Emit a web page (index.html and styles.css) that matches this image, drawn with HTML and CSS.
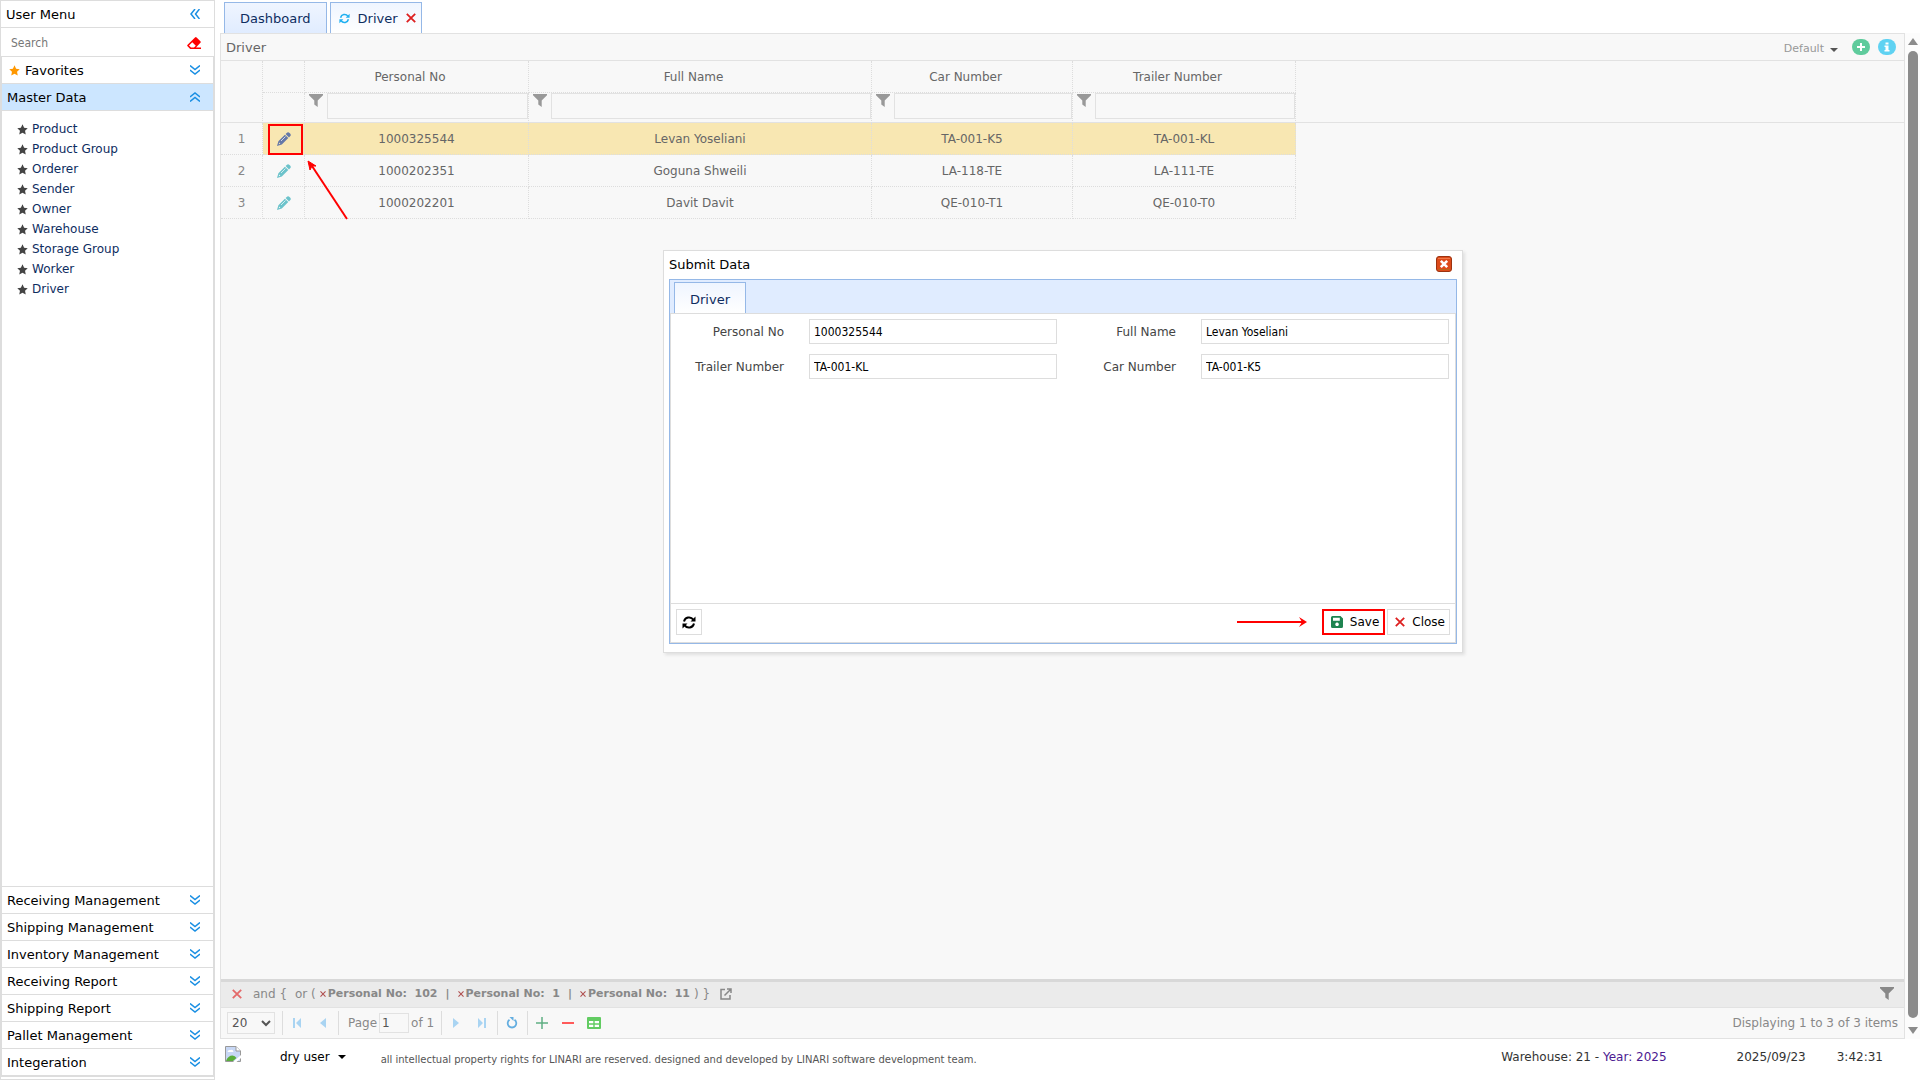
FILE: index.html
```html
<!DOCTYPE html>
<html lang="en">
  <head>
  <meta charset="UTF-8">
  <meta name="viewport" content="width=device-width,initial-scale=1.0">
  <title>Driver</title>
  <link rel="stylesheet" href="styles.css">
  </head>
  <body>
    <svg class="icon_defs" aria-hidden="true">
      <symbol id="i_down" viewBox="0 0 10 10"><path d="M0 0.5L5 4.5L10 0.5M0 5L5 9L10 5" fill="none" stroke="currentColor" stroke-width="1.5"/></symbol>
      <symbol id="i_up" viewBox="0 0 10 10"><path d="M0 5L5 1L10 5M0 9.5L5 5.5L10 9.5" fill="none" stroke="currentColor" stroke-width="1.5"/></symbol>
      <symbol id="i_left" viewBox="0 0 10 10"><path d="M5 0L1 5L5 10M9.5 0L5.5 5L9.5 10" fill="none" stroke="currentColor" stroke-width="1.5"/></symbol>
      <symbol id="i_star" viewBox="0 0 20 20"><path d="M10 0.5l2.9 6.3 6.6.8-4.900 4.700 1.300 6.900-5.900-3.400-5.900 3.400 1.300-6.900L0.500 7.600l6.600-.8z" fill="currentColor"/></symbol>
      <symbol id="i_funnel" viewBox="0 0 14 13"><path d="M0 0H14V1.200L8.700 6.500V13L5.300 10.500V6.500L0 1.200z" fill="currentColor"/></symbol>
      <symbol id="i_pencil" viewBox="0 0 14 14"><path d="M9.700.9a2 2 0 0 1 2.800 0l.6.6a2 2 0 0 1 0 2.800l-1.100 1.100L8.600 2zM7.900 2.700l3.400 3.400-6.500 6.500L0 14l1.400-4.800zM2.300 10.600l-.6 1.700 1.700-.6z" fill="currentColor" fill-rule="evenodd"/><path d="M4 9L8.500 4.500" stroke="#fff" stroke-width=".7"/></symbol>
      <symbol id="i_x" viewBox="0 0 10 10"><path d="M.8.8L9.200 9.200M9.200.8L.8 9.200" stroke="currentColor" stroke-width="1.800"/></symbol>
      <symbol id="i_sync" viewBox="0 0 14 13"><path d="M2 5.500A5.200 5.200 0 0 1 11.300 3.600M12 7.500A5.200 5.200 0 0 1 2.700 9.400" fill="none" stroke="currentColor" stroke-width="2"/><path d="M13.500.5V5.500H8.500zM.5 12.500V7.500H5.500z" fill="currentColor"/></symbol>
      <symbol id="i_eraser" viewBox="0 0 14 12"><path d="M8 .4q.8-.7 1.600 0L13.400 4.200q.8.800 0 1.600L9 10.500H14V12H3.200L.6 9.300q-.9-.8 0-1.600zM5.300 5.300L2 8.500l2 2h3l1.800-1.800z" fill="currentColor" fill-rule="evenodd"/></symbol>
      <symbol id="i_caret" viewBox="0 0 8 4"><path d="M0 0H8L4 4z" fill="currentColor"/></symbol>
    </svg>
    <nav class="side_menu">
      <div class="menu_title">User Menu
        <button type="button" class="icon_btn blue" aria-label="Collapse menu"><svg width="10" height="10"><use href="#i_left"/></svg></button>
      </div>
      <div class="menu_search">
        <input type="text" placeholder="Search" aria-label="Search">
        <button type="button" class="icon_btn red" aria-label="Clear search"><svg width="14" height="12"><use href="#i_eraser"/></svg></button>
      </div>
      <div class="accordion">
        <button type="button" class="acc_head favorites"><svg class="fav_star" width="11" height="11"><use href="#i_star"/></svg><span>Favorites</span><svg class="arrow" width="10" height="10"><use href="#i_down"/></svg></button>
        <button type="button" class="acc_head selected"><span>Master Data</span><svg class="arrow" width="10" height="10"><use href="#i_up"/></svg></button>
        <ul class="acc_body">
          <li><a href="#"><svg width="11" height="11"><use href="#i_star"/></svg>Product</a></li>
          <li><a href="#"><svg width="11" height="11"><use href="#i_star"/></svg>Product Group</a></li>
          <li><a href="#"><svg width="11" height="11"><use href="#i_star"/></svg>Orderer</a></li>
          <li><a href="#"><svg width="11" height="11"><use href="#i_star"/></svg>Sender</a></li>
          <li><a href="#"><svg width="11" height="11"><use href="#i_star"/></svg>Owner</a></li>
          <li><a href="#"><svg width="11" height="11"><use href="#i_star"/></svg>Warehouse</a></li>
          <li><a href="#"><svg width="11" height="11"><use href="#i_star"/></svg>Storage Group</a></li>
          <li><a href="#"><svg width="11" height="11"><use href="#i_star"/></svg>Worker</a></li>
          <li><a href="#"><svg width="11" height="11"><use href="#i_star"/></svg>Driver</a></li>
        </ul>
        <button type="button" class="acc_head"><span>Receiving Management</span><svg class="arrow" width="10" height="10"><use href="#i_down"/></svg></button>
        <button type="button" class="acc_head"><span>Shipping Management</span><svg class="arrow" width="10" height="10"><use href="#i_down"/></svg></button>
        <button type="button" class="acc_head"><span>Inventory Management</span><svg class="arrow" width="10" height="10"><use href="#i_down"/></svg></button>
        <button type="button" class="acc_head"><span>Receiving Report</span><svg class="arrow" width="10" height="10"><use href="#i_down"/></svg></button>
        <button type="button" class="acc_head"><span>Shipping Report</span><svg class="arrow" width="10" height="10"><use href="#i_down"/></svg></button>
        <button type="button" class="acc_head"><span>Pallet Management</span><svg class="arrow" width="10" height="10"><use href="#i_down"/></svg></button>
        <button type="button" class="acc_head"><span>Integeration</span><svg class="arrow" width="10" height="10"><use href="#i_down"/></svg></button>
      </div>
    </nav>
    <main class="content">
      <div class="tabs">
        <a href="#" class="tab">Dashboard</a>
        <div class="tab active">
          <svg class="sky" width="11" height="11"><use href="#i_sync"/></svg>
          <a href="#">Driver</a>
          <button type="button" class="icon_btn red_x" aria-label="Close tab"><svg width="10" height="10"><use href="#i_x"/></svg></button>
        </div>
      </div>
      <div class="workspace">
        <section class="grid_panel">
          <div class="grid_title">
            <span>Driver</span>
            <button type="button" class="default_btn">Default <svg width="8" height="4"><use href="#i_caret"/></svg></button>
            <button type="button" class="icon_btn" aria-label="Add"><svg width="18" height="16" viewBox="0 0 18 16"><rect width="18" height="16" rx="8" fill="#5fcb9c"/><path d="M9 4V12M5 8H13" stroke="#fff" stroke-width="2"/></svg></button>
            <button type="button" class="icon_btn" aria-label="Info"><svg width="18" height="16" viewBox="0 0 18 16"><rect width="18" height="16" rx="8" fill="#5fd2f2"/><path d="M7.500 3.500h3v2h-3zM6.500 6.500h4v4.500h1v1.500h-5v-1.500h1v-3h-1z" fill="#fff"/></svg></button>
          </div>
          <div class="grid_view">
            <table class="grid">
              <colgroup>
                <col class="col_num"><col class="col_edit"><col class="col_personal"><col class="col_name"><col class="col_car"><col class="col_trailer"><col>
              </colgroup>
              <thead>
                <tr>
                  <th rowspan="2" class="last_head"></th>
                  <th></th>
                  <th>Personal No</th>
                  <th>Full Name</th>
                  <th>Car Number</th>
                  <th>Trailer Number</th>
                  <th rowspan="2" class="last_head filler"></th>
                </tr>
                <tr class="filter_row">
                  <th></th>
                  <th><div class="filter"><svg width="14" height="13"><use href="#i_funnel"/></svg><input type="text" aria-label="Filter Personal No"></div></th>
                  <th><div class="filter"><svg width="14" height="13"><use href="#i_funnel"/></svg><input type="text" aria-label="Filter Full Name"></div></th>
                  <th><div class="filter"><svg width="14" height="13"><use href="#i_funnel"/></svg><input type="text" aria-label="Filter Car Number"></div></th>
                  <th><div class="filter"><svg width="14" height="13"><use href="#i_funnel"/></svg><input type="text" aria-label="Filter Trailer Number"></div></th>
                </tr>
              </thead>
              <tbody>
                <tr class="selected_row">
                  <td class="num">1</td>
                  <td class="edit">
                    <button type="button" class="icon_btn" aria-label="Edit"><svg width="14" height="14"><use href="#i_pencil"/></svg></button>
                    <svg class="edit_mark" width="82" height="98" viewBox="0 0 82 98">
                      <rect x="1" y="1" width="33" height="29" fill="none" stroke="#f00" stroke-width="2"/>
                      <path d="M79 95L44 42" stroke="#f00" stroke-width="2"/>
                      <path d="M40 37L48 42L44 42L42 46z" fill="#f00" stroke="#f00"/>
                    </svg>
                  </td>
                  <td>1000325544</td><td>Levan Yoseliani</td><td>TA-001-K5</td><td>TA-001-KL</td><td class="filler"></td>
                </tr>
                <tr>
                  <td class="num">2</td>
                  <td class="edit"><button type="button" class="icon_btn" aria-label="Edit"><svg width="14" height="14"><use href="#i_pencil"/></svg></button></td>
                  <td>1000202351</td><td>Goguna Shweili</td><td>LA-118-TE</td><td>LA-111-TE</td><td class="filler"></td>
                </tr>
                <tr>
                  <td class="num">3</td>
                  <td class="edit"><button type="button" class="icon_btn" aria-label="Edit"><svg width="14" height="14"><use href="#i_pencil"/></svg></button></td>
                  <td>1000202201</td><td>Davit Davit</td><td>QE-010-T1</td><td>QE-010-T0</td><td class="filler"></td>
                </tr>
              </tbody>
            </table>
          </div>
          <div class="filter_bar">
            <button type="button" class="icon_btn soft_red" aria-label="Clear filters"><svg width="10" height="10"><use href="#i_x"/></svg></button>
            <span class="op">and {</span>
            <span>or (</span>
            <div class="rules">
              <span class="rule"><svg width="6" height="6"><use href="#i_x"/></svg><b>Personal No:&nbsp; 102</b></span>
              <b>|</b>
              <span class="rule"><svg width="6" height="6"><use href="#i_x"/></svg><b>Personal No:&nbsp; 1</b></span>
              <b>|</b>
              <span class="rule"><svg width="6" height="6"><use href="#i_x"/></svg><b>Personal No:&nbsp; 11</b></span>
            </div>
            <span>) }</span>
            <button type="button" class="icon_btn open_btn" aria-label="Open filter"><svg width="12" height="12" viewBox="0 0 12 12"><path d="M5 1.500H1V11H10V7M7 1H11V5M11 1L4.500 7.500" fill="none" stroke="#888" stroke-width="1.500"/></svg></button>
            <svg class="bar_funnel" width="14" height="13"><use href="#i_funnel"/></svg>
          </div>
          <div class="pager">
            <select aria-label="Page size"><option>20</option></select>
            <i class="sep"></i>
            <button type="button" class="pager_btn pale" aria-label="First page"><svg width="10" height="10" viewBox="0 0 10 10"><path d="M1 0H3V10H1zM9 0V10L4 5z" fill="currentColor"/></svg></button>
            <button type="button" class="pager_btn pale" aria-label="Previous page"><svg width="10" height="10" viewBox="0 0 10 10"><path d="M8 0V10L2 5z" fill="currentColor"/></svg></button>
            <i class="sep"></i>
            <label class="page_no">Page<input type="text" value="1"></label>
            <span class="page_of">of 1</span>
            <i class="sep"></i>
            <button type="button" class="pager_btn pale" aria-label="Next page"><svg width="10" height="10" viewBox="0 0 10 10"><path d="M2 0V10L8 5z" fill="currentColor"/></svg></button>
            <button type="button" class="pager_btn pale" aria-label="Last page"><svg width="10" height="10" viewBox="0 0 10 10"><path d="M7 0H9V10H7zM1 0V10L6 5z" fill="currentColor"/></svg></button>
            <i class="sep"></i>
            <button type="button" class="pager_btn blue_soft" aria-label="Reload"><svg width="12" height="12" viewBox="0 0 12 12"><path d="M8.500 2.700A4.300 4.300 0 1 1 3.500 2.700" fill="none" stroke="currentColor" stroke-width="1.800"/><path d="M3.500 0H7.500V4z" fill="currentColor"/></svg></button>
            <i class="sep"></i>
            <button type="button" class="pager_btn green" aria-label="Add row"><svg width="12" height="12" viewBox="0 0 12 12"><path d="M6 0V12M0 6H12" stroke="currentColor" stroke-width="1.500"/></svg></button>
            <button type="button" class="pager_btn" aria-label="Remove row"><svg width="12" height="12" viewBox="0 0 12 12"><path d="M0 6H12" stroke="#ff5a5a" stroke-width="2"/></svg></button>
            <button type="button" class="pager_btn" aria-label="Export"><svg width="14" height="12" viewBox="0 0 14 12"><rect width="14" height="12" rx="1" fill="#62cc62"/><path d="M2 4H6.300V6.300H2zM7.700 4H12V6.300H7.700zM2 7.700H6.300V10H2zM7.700 7.700H12V10H7.700z" fill="#fff"/></svg></button>
            <span class="displaying">Displaying 1 to 3 of 3 items</span>
          </div>
        </section>
        <div class="scrollbar" aria-hidden="true">
          <svg width="10" height="7"><path d="M5 0L10 7H0z" fill="#8b8b8b"/></svg>
          <div class="thumb"></div>
          <svg width="10" height="7"><path d="M0 0H10L5 7z" fill="#8b8b8b"/></svg>
        </div>
        <form class="dialog" role="dialog" aria-labelledby="dialog_title">
          <div class="dialog_head">
            <span id="dialog_title">Submit Data</span>
            <button type="button" class="icon_btn" aria-label="Close dialog"><svg width="16" height="16" viewBox="0 0 16 16"><rect x=".5" y=".5" width="15" height="15" rx="2.500" fill="#dd4b1a" stroke="#9c3310"/><path d="M2 2H14V3H2z" fill="#f0794a"/><path d="M2 13H14V14H2z" fill="#b9661c"/><path d="M4.800 4.800L11.200 11.200M11.200 4.800L4.800 11.200" stroke="#fff" stroke-width="2.600"/></svg></button>
          </div>
          <div class="dialog_body">
            <div class="dialog_tabs"><a href="#" class="tab active">Driver</a></div>
            <div class="fields">
              <label for="personal_no">Personal No</label><input type="text" id="personal_no" value="1000325544">
              <label for="full_name">Full Name</label><input type="text" id="full_name" value="Levan Yoseliani">
              <label for="trailer_number">Trailer Number</label><input type="text" id="trailer_number" value="TA-001-KL">
              <label for="car_number">Car Number</label><input type="text" id="car_number" value="TA-001-K5">
            </div>
            <div class="dialog_foot">
              <button type="button" class="foot_btn refresh_btn" aria-label="Refresh"><svg width="14" height="13"><use href="#i_sync"/></svg></button>
              <svg class="save_arrow" width="71" height="12" viewBox="0 0 71 12"><path d="M0 6H68" stroke="#f00" stroke-width="2"/><path d="M62 1L70 6L62 11L65 6z" fill="#f00"/></svg>
              <button type="button" class="foot_btn save_btn"><svg width="12" height="12" viewBox="0 0 12 12"><path d="M1.500 0H9.500L12 2.500V10.500Q12 12 10.500 12H1.500Q0 12 0 10.500V1.500Q0 0 1.500 0zM2 1.800V4.800H8.800V1.800zM6 6.500a1.800 1.800 0 1 0 .1 0z" fill="#1e8450" fill-rule="evenodd"/></svg>Save</button>
              <button type="button" class="foot_btn"><svg class="red_x" width="10" height="10"><use href="#i_x"/></svg>Close</button>
            </div>
          </div>
        </form>
      </div>
      <footer class="status">
        <svg class="logo" width="16" height="16" viewBox="0 0 16 16" role="img" aria-label="Company logo"><path d="M.5.500H11L15.500 5V15.500H.5z" fill="#c7d7f5" stroke="#999"/><path d="M2.500 6Q3 3.500 5.500 4Q8 3 8.500 6z" fill="#fff"/><path d="M1 15Q3 9.500 7.500 9.500Q10 9.700 11.500 12L8 15z" fill="#59ad3b"/><path d="M11 .5V5H15.500" fill="#fff" stroke="#999"/><path d="M8 16L16 9V12L11.500 16z" fill="#fff"/></svg>
        <button type="button" class="user_btn">dry user <svg width="8" height="4"><use href="#i_caret"/></svg></button>
        <small>all intellectual property rights for LINARI are reserved. designed and developed by LINARI software development team.</small>
        <span class="warehouse">Warehouse: 21 - <a href="#">Year: 2025</a></span>
        <span class="date">2025/09/23</span>
        <span>3:42:31</span>
      </footer>
    </main>
  </body>
</html>
```
FILE: styles.css
```css
*{
  box-sizing:border-box;
}
body{
  display:flex;
  gap:5px;
  height:100vh;
  margin:0;
  background-color:#ffffff;
  color:#000000;
  font-family:Verdana, "DejaVu Sans", sans-serif;
  font-size:12px;
}
button, input, select{
  font:inherit;
  color:inherit;
}
a{
  color:inherit;
  text-decoration:none;
}
svg{
  display:block;
  flex:none;
}
.icon_defs{
  position:absolute;
  width:0;
  height:0;
}
.icon_btn{
  display:block;
  padding:0;
  border:0;
  background:none;
}
.blue{
  color:#1a8fe3;
}
.red{
  color:#ff0000;
}
.red_x{
  color:#dd2020;
}
.soft_red{
  color:#e46a6a;
}
.sky{
  color:#1fb0f0;
}

/* side menu */
.side_menu{
  display:flex;
  flex-direction:column;
  flex:none;
  width:215px;
  border:1px solid #dddddd;
  padding-bottom:2px;
}
.menu_title{
  display:flex;
  align-items:center;
  justify-content:space-between;
  height:27px;
  padding:0 14px 0 5px;
  border-bottom:1px solid #dddddd;
  font-size:13px;
}
.menu_search{
  display:flex;
  align-items:center;
  height:28px;
  padding:2px 13px 0 10px;
}
.menu_search input{
  flex:1;
  min-width:0;
  padding:0;
  border:0;
  outline:0;
  font-family:Tahoma, "DejaVu Sans Condensed", "DejaVu Sans", sans-serif;
}
.menu_search input::placeholder{
  color:#777777;
}
.accordion{
  display:flex;
  flex-direction:column;
  flex:1;
  border:1px solid #dddddd;
}
.acc_head{
  display:flex;
  align-items:center;
  height:27px;
  padding:0 13px 0 5px;
  border:0;
  border-bottom:1px solid #dddddd;
  background-color:#ffffff;
  font-size:13px;
}
.favorites{
  padding-left:7px;
}
.acc_head.selected{
  background-color:#cce6ff;
}
.fav_star{
  margin-right:5px;
  color:#ff9800;
}
.arrow{
  margin-left:auto;
  color:#1a8fe3;
}
.acc_body{
  flex:1;
  margin:0;
  padding:8px 15px;
  border-bottom:1px solid #dddddd;
  list-style:none;
}
.acc_body a{
  display:flex;
  align-items:center;
  gap:4px;
  height:20px;
  color:#0e2d5f;
}
.acc_body svg{
  color:#444444;
}

/* tabs */
.content{
  display:flex;
  flex-direction:column;
  flex:1;
  min-width:0;
}
.tabs{
  display:flex;
  align-items:flex-end;
  gap:4px;
  height:33px;
  padding:0 4px;
}
.tab{
  display:flex;
  align-items:center;
  height:31px;
  padding:0 15px;
  border:1px solid #95b8e7;
  border-bottom:0;
  background:linear-gradient(to bottom,#eff5ff,#e0ecff);
  color:#0e2d5f;
  font-size:13px;
}
.tab.active{
  gap:8px;
  background:linear-gradient(to bottom,#eff5ff,#ffffff);
}
.tabs .active{
  margin-left:-1px;
  padding:0 5px 0 8px;
}

/* grid */
.workspace{
  display:flex;
  flex:1;
  min-height:0;
  position:relative;
}
.grid_panel{
  display:flex;
  flex-direction:column;
  flex:1;
  min-width:0;
  border:1px solid #e2e2e2;
  background-color:#f8f8f8;
  color:#666666;
}
.grid_title{
  display:flex;
  align-items:center;
  gap:8px;
  height:27px;
  padding:0 8px 0 5px;
  border-bottom:1px solid #e2e2e2;
  font-size:13px;
}
.default_btn{
  display:flex;
  align-items:center;
  gap:6px;
  margin-left:auto;
  margin-right:6px;
  padding:2px 0 0;
  border:0;
  background:none;
  color:#999999;
  font-size:11px;
}
.default_btn svg{
  margin-top:3px;
  color:#555555;
}
.grid_view{
  flex:1;
  overflow:hidden;
}
.grid{
  width:100%;
  table-layout:fixed;
  border-collapse:separate;
  border-spacing:0;
}
.col_num{
  width:42px;
}
.col_edit{
  width:42px;
}
.col_personal{
  width:224px;
}
.col_name{
  width:343px;
}
.col_car{
  width:201px;
}
.col_trailer{
  width:223px;
}
.grid th,
.grid td{
  height:32px;
  padding:0;
  border-right:1px dotted #dddddd;
  border-bottom:1px dotted #dddddd;
  font-weight:normal;
  text-align:center;
}
.grid thead th{
  padding-right:13px;
}
.grid thead .filter_row th{
  height:30px;
  padding:0;
  border-bottom:1px solid #e2e2e2;
  vertical-align:top;
}
.grid thead .last_head{
  border-bottom:1px solid #e2e2e2;
}
.grid .filler{
  border-right:0;
}
.grid td.filler{
  border-bottom:0;
}
.filter{
  display:flex;
  gap:4px;
  padding-left:4px;
}
.filter svg{
  margin-top:1px;
  color:#999999;
}
.filter input{
  flex:1;
  min-width:0;
  height:26px;
  border:1px solid #e2e2e2;
  background-color:#f8f8f8;
}
.grid .num{
  color:#888888;
}
.grid .edit{
  position:relative;
  padding-left:1px;
  color:#6cc3cb;
}
.edit .icon_btn{
  margin:0 auto;
}
.selected_row td:not(.num):not(.filler){
  background-color:#f8e7b2;
}
.grid .selected_row .edit{
  color:#6478a8;
}
.edit_mark{
  position:absolute;
  left:5px;
  top:1px;
  z-index:1;
}

/* filter rules and pager */
.filter_bar{
  display:flex;
  align-items:center;
  gap:4px;
  height:29px;
  padding:0 10px 2px 11px;
  border-top:3px solid #d8d8d8;
  border-bottom:1px solid #e2e2e2;
  background-color:#ebebeb;
  color:#888888;
}
.filter_bar b{
  font-size:11px;
}
.filter_bar .op{
  margin:0 4px 0 7px;
}
.rules{
  display:flex;
  align-items:center;
  gap:8px;
}
.rule{
  display:flex;
  align-items:center;
  gap:2px;
}
.rule svg{
  color:#b05050;
}
.open_btn{
  margin-left:6px;
}
.bar_funnel{
  margin-left:auto;
}
.pager{
  display:flex;
  align-items:center;
  height:30px;
  padding:0 6px;
  color:#888888;
}
.pager select{
  width:48px;
  height:22px;
  margin-right:5px;
  border:1px solid #e2e2e2;
  background-color:#f8f8f8;
  color:#555555;
}
.sep{
  width:1px;
  height:24px;
  margin:0 1px 0 2px;
  background-color:#dddddd;
}
.pager_btn{
  display:flex;
  align-items:center;
  justify-content:center;
  width:26px;
  height:22px;
  padding:0;
  border:0;
  background:none;
}
.pale{
  color:#a9d4f2;
}
.blue_soft{
  color:#64aee0;
}
.green{
  color:#5fae82;
}
.page_no{
  display:flex;
  align-items:center;
  gap:2px;
  margin-left:8px;
}
.page_no input{
  width:30px;
  height:20px;
  padding:0 2px;
  border:1px solid #e2e2e2;
  background-color:#f8f8f8;
  color:#555555;
}
.page_of{
  margin:0 5px 0 2px;
}
.displaying{
  margin-left:auto;
}
.scrollbar{
  display:flex;
  flex-direction:column;
  align-items:center;
  gap:6px;
  flex:none;
  width:15px;
  padding:5px 0;
  background-color:#fcfcfc;
}
.scrollbar svg:last-child{
  margin-top:3px;
}
.thumb{
  flex:1;
  width:10px;
  border-radius:5px;
  background-color:#8b8b8b;
}

/* submit dialog */
.dialog{
  position:absolute;
  top:217px;
  left:50%;
  width:800px;
  margin-left:-407px;
  padding:0 5px 8px;
  border:1px solid #dddddd;
  background-color:#ffffff;
  box-shadow:2px 2px 3px #e0e0e0;
}
.dialog_head{
  display:flex;
  align-items:center;
  justify-content:space-between;
  height:28px;
  padding:0 5px 2px 0;
  font-size:13px;
}
.dialog_body{
  display:flex;
  flex-direction:column;
  height:365px;
  border:1px solid #95b8e7;
}
.dialog_tabs{
  display:flex;
  align-items:flex-end;
  height:34px;
  padding-left:4px;
  border-bottom:1px solid #dddddd;
  background-color:#e0ecff;
}
.dialog_tabs .tab{
  padding-top:2px;
}
.fields{
  display:grid;
  grid-template-columns:113px 1fr 94px 1fr;
  grid-auto-rows:25px;
  align-items:center;
  gap:10px 25px;
  flex:1;
  padding:5px 6px 0 0;
  border:solid #dddddd;
  border-width:0 1px;
  color:#444444;
}
.fields label{
  text-align:right;
}
.fields input{
  width:100%;
  min-width:0;
  height:25px;
  padding:0 4px;
  border:1px solid #dddddd;
  color:#000000;
  font-family:Tahoma, "DejaVu Sans Condensed", "DejaVu Sans", sans-serif;
}
.dialog_foot{
  display:flex;
  align-items:flex-start;
  gap:2px;
  height:40px;
  padding:5px;
  border:1px solid #dddddd;
}
.foot_btn{
  display:flex;
  align-items:center;
  gap:7px;
  height:26px;
  padding:0 4px 0 7px;
  border:1px solid #dddddd;
  background-color:#ffffff;
}
.refresh_btn{
  width:26px;
  padding:0 5px;
}
.save_arrow{
  margin-top:7px;
  margin-right:12px;
  margin-left:auto;
}
.save_btn{
  border:2px solid #ff0000;
}

/* footer */
.status{
  display:flex;
  align-items:center;
  height:41px;
  padding:0 37px 5px 5px;
  color:#333333;
}
.logo{
  margin-bottom:6px;
}
.user_btn{
  display:flex;
  align-items:center;
  gap:8px;
  margin:0 35px 0 39px;
  padding:0;
  border:0;
  background:none;
  color:#000000;
}
.status small{
  padding-top:4px;
  color:#555555;
  font-size:10px;
}
.warehouse{
  margin-left:auto;
}
.warehouse a{
  color:#4b1a91;
}
.date{
  margin:0 31px 0 70px;
}
```
